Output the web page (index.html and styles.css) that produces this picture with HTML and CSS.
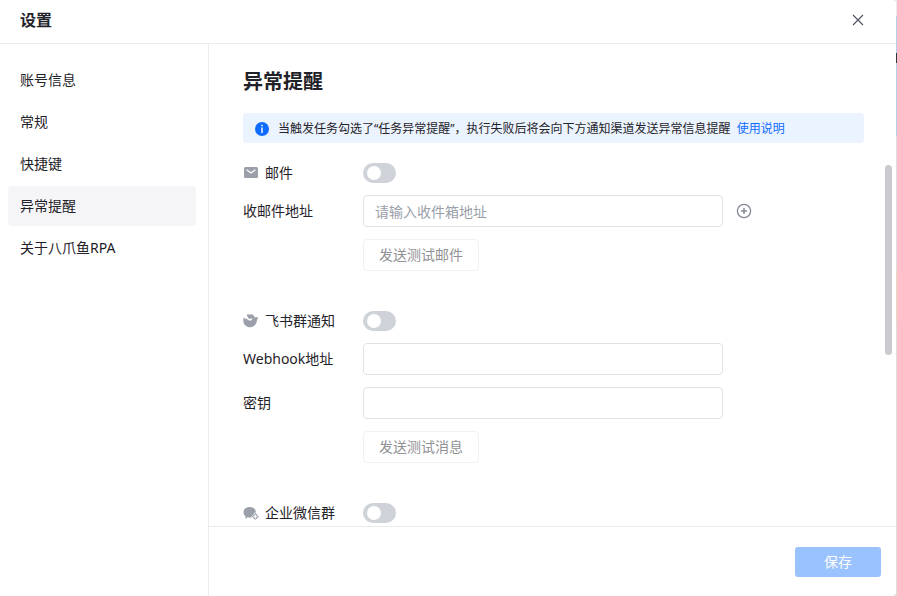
FILE: index.html
```
<!DOCTYPE html>
<html lang="zh-CN">
<head>
    <meta charset="UTF-8">
    <meta name="viewport" content="width=device-width, initial-scale=1.0">
    <title>设置</title>
    <link rel="stylesheet" href="styles.css">
</head>
<body>
    <div class="dialog">
        <header class="dialog-header">
            <h1>设置</h1>
            <button class="close-btn" type="button" aria-label="关闭">
                <svg width="12" height="12" viewBox="0 0 12 12" fill="none" stroke="#4e5464" stroke-width="1.2">
                    <path d="M1 1l10 10M11 1L1 11"/>
                </svg>
            </button>
        </header>

        <div class="dialog-body">
            <nav class="sidebar">
                <a href="#account">账号信息</a>
                <a href="#general">常规</a>
                <a href="#shortcut">快捷键</a>
                <a href="#alert" class="active">异常提醒</a>
                <a href="#about">关于八爪鱼RPA</a>
            </nav>

            <form class="content">
                <div class="scroll-area">
                    <h2>异常提醒</h2>

                    <div class="tip">
                        <svg width="14" height="14" viewBox="0 0 14 14">
                            <circle cx="7" cy="7" r="7" fill="#0f6bff"/>
                            <path d="M6.3 2.8h1.4v1.5H6.3zM6.3 5.6h1.4v5.4H6.3z" fill="#fff"/>
                        </svg>
                        <span>当触发任务勾选了“任务异常提醒”，执行失败后将会向下方通知渠道发送异常信息提醒</span>
                        <a href="#help">使用说明</a>
                    </div>

                    <!-- 邮件 -->
                    <section class="channel">
                        <div class="row">
                            <label class="name" for="mailSwitch">
                                <svg width="16" height="16" viewBox="0 0 16 16">
                                    <rect x="1" y="2" width="14" height="11" rx="1.5" fill="#9a9faa"/>
                                    <path d="M3.6 4.8L8 8l4.4-3.2" fill="none" stroke="#fff" stroke-width="1.3"/>
                                </svg>
                                邮件
                            </label>
                            <input type="checkbox" class="switch" id="mailSwitch">
                        </div>
                        <div class="row">
                            <label for="mailAddress">收邮件地址</label>
                            <input type="text" class="text-input" id="mailAddress" placeholder="请输入收件箱地址">
                            <button class="add-btn" type="button" aria-label="添加">
                                <svg width="16" height="16" viewBox="0 0 16 16" fill="none" stroke="#858a96">
                                    <circle cx="8" cy="8" r="6.6" stroke-width="1.3"/>
                                    <path d="M8 5v6M5 8h6" stroke-width="1.5"/>
                                </svg>
                            </button>
                        </div>
                        <button class="test-btn" type="button" disabled>发送测试邮件</button>
                    </section>

                    <!-- 飞书 -->
                    <section class="channel">
                        <div class="row">
                            <label class="name" for="feishuSwitch">
                                <svg width="16" height="16" viewBox="0 0 16 16">
                                    <path d="M3.4 1.6H10c.8.9 1.3 1.900 1.500 3 1.300-.5 2.500-.5 3.800.1-.9.9-1.200 1.800-1.400 3-.6 4-3.200 6.600-6.800 6.600C3.600 14.300.9 11.900.4 8.800V4.600l2.400 1.300 2.300-1.500z" fill="#9a9faa"/>
                                    <path d="M2.900 3.700c1.200 1.700 2.500 2.700 4.200 3.400L8.900 5.500" fill="none" stroke="#fff" stroke-width="1.600"/>
                                </svg>
                                飞书群通知
                            </label>
                            <input type="checkbox" class="switch" id="feishuSwitch">
                        </div>
                        <div class="row">
                            <label for="webhook">Webhook地址</label>
                            <input type="text" class="text-input" id="webhook">
                        </div>
                        <div class="row">
                            <label for="secret">密钥</label>
                            <input type="text" class="text-input" id="secret">
                        </div>
                        <button class="test-btn" type="button" disabled>发送测试消息</button>
                    </section>

                    <!-- 企业微信 -->
                    <section class="channel">
                        <div class="row">
                            <label class="name" for="wecomSwitch">
                                <svg width="16" height="16" viewBox="0 0 16 16">
                                    <path d="M6.7 1.9C3.2 1.9.5 4.2.5 7.2c0 1.600.8 3 2 3.900l-.2 2.600 2.500-1.500c4 1 8-1 8-5 0-3-2.600-5.300-6.100-5.300z" fill="#9a9faa"/>
                                    <path d="M12.300 7.200l4 4.200-4 4-4-4z" fill="#fff"/>
                                    <path d="M12.300 8.700l2.700 2.700-2.700 2.700-2.700-2.700z" fill="none" stroke="#9a9faa" stroke-width="1.300" stroke-dasharray="2.900 .9"/>
                                </svg>
                                企业微信群
                            </label>
                            <input type="checkbox" class="switch" id="wecomSwitch">
                        </div>
                    </section>
                </div>

                <div class="scroll-thumb"></div>

                <footer class="dialog-footer">
                    <button class="save-btn" type="submit" disabled>保存</button>
                </footer>
            </form>
        </div>
    </div>
</body>
</html>
```
FILE: styles.css
```
* {
    box-sizing: border-box;
}

body {
    margin: 0;
    padding-right: 1px;
    height: 100vh;
    font-family: 'Noto Sans', 'Noto Sans CJK SC', sans-serif;
    font-size: 14px;
    line-height: 20px;
    color: #1f2329;
    /* window behind the dialog */
    background: linear-gradient(#e9e9f0 0 16px, #b9cfea 16px 53px, #33363c 53px 63px, #b9cfea 63px 136px, #dcdedf 136px 270px, #e4d8c6 270px 322px, #dcdcdc 322px);
}

button,
input {
    font: inherit;
    margin: 0;
}

a {
    text-decoration: none;
}

svg {
    display: block;
    flex: none;
}

.dialog {
    display: flex;
    flex-direction: column;
    height: 100%;
    background: #fff;
    border-radius: 0 4px 4px 0;
    overflow: hidden;
}

.dialog-header {
    display: flex;
    justify-content: space-between;
    align-items: center;
    height: 44px;
    padding: 0 28px 4px 20px;
    border-bottom: 1px solid #ebecee;
}

h1 {
    margin: 0;
    font-size: 16px;
    font-weight: 600;
}

.close-btn,
.add-btn {
    display: flex;
    align-items: center;
    justify-content: center;
    padding: 4px;
    border: none;
    background: none;
    cursor: pointer;
}

.dialog-body {
    display: flex;
    flex: 1;
    min-height: 0;
}

.sidebar {
    display: flex;
    flex-direction: column;
    gap: 2px;
    flex: none;
    width: 209px;
    padding: 16px 12px 16px 8px;
    border-right: 1px solid #ebecee;
}

.sidebar a {
    padding: 10px 12px;
    border-radius: 4px;
    color: #1f2329;
}

.sidebar a.active {
    background: #f5f5f8;
}

.content {
    position: relative;
    display: flex;
    flex-direction: column;
    flex: 1;
    min-width: 0;
}

.scroll-area {
    flex: 1;
    min-height: 0;
    padding: 23px 32px 0 34px;
    overflow-y: auto;
    scrollbar-width: none;
}

/* lies over the right edge of the scroll area */
.scroll-thumb {
    position: absolute;
    top: 121px;
    right: 4px;
    width: 7px;
    height: 190px;
    border-radius: 4px;
    background: #c9cbd0;
}

h2 {
    margin: 0 0 16px;
    font-size: 20px;
    line-height: 30px;
    font-weight: 700;
}

.tip {
    display: flex;
    align-items: center;
    min-height: 30px;
    margin-bottom: 20px;
    padding: 1px 12px 0;
    border-radius: 4px;
    background: #ebf3ff;
    font-size: 12px;
}

.tip span {
    margin: 0 6px 0 9px;
}

.tip a {
    color: #0f6bff;
}

.channel {
    display: flex;
    flex-direction: column;
    gap: 12px;
    margin-bottom: 40px;
}

.channel:last-child {
    margin-bottom: 0;
}

.row {
    display: flex;
    align-items: center;
}

.row label {
    flex: none;
    width: 120px;
}

.row .name {
    display: flex;
    align-items: center;
    gap: 6px;
}

.switch {
    appearance: none;
    width: 33px;
    height: 20px;
    padding: 3px 4px;
    border-radius: 10px;
    background: #cfd2d9;
    cursor: pointer;
}

.switch::before {
    content: "";
    display: block;
    width: 14px;
    height: 14px;
    border-radius: 50%;
    background: #fff;
}

.switch:checked {
    background: #0f6bff;
}

.switch:checked::before {
    margin-left: auto;
}

.text-input {
    width: 360px;
    height: 32px;
    padding: 0 11px;
    border: 1px solid #e0e2e8;
    border-radius: 4px;
    color: #1f2329;
    background: #fff;
}

.text-input::placeholder {
    color: #9a9faa;
}

.add-btn {
    margin-left: 9px;
}

.test-btn {
    align-self: flex-start;
    height: 32px;
    margin-left: 120px;
    padding: 0 15px;
    border: 1px solid #f0f1f3;
    border-radius: 4px;
    background: #fff;
    color: #8f9194;
}

.dialog-footer {
    display: flex;
    justify-content: flex-end;
    padding: 20px 15px 19px;
    border-top: 1px solid #ebecee;
}

.save-btn {
    width: 86px;
    height: 30px;
    border: none;
    border-radius: 3px;
    background: #99c2ff;
    color: #fff;
}
```
